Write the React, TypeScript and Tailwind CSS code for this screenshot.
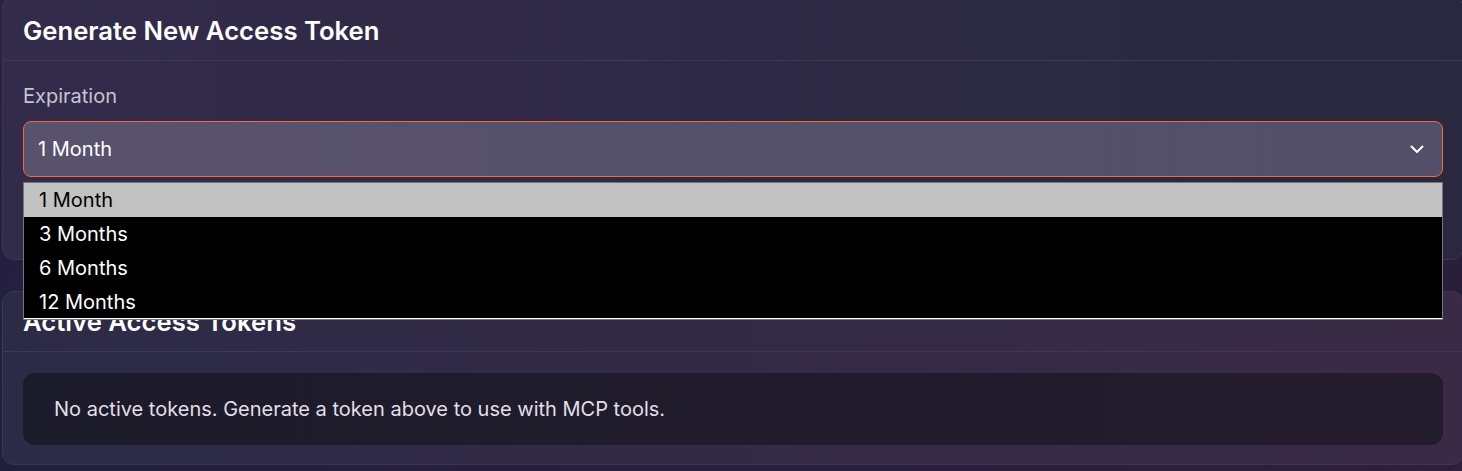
import React from "react";

export default function App() {
  const options = ["1 Month", "3 Months", "6 Months", "12 Months"];
  return (
    <div
      className="relative w-[1462px] h-[471px] overflow-hidden bg-gradient-to-br from-[#2a2246] via-[#211f3c] to-[#2e1f3b]"
      style={{ fontFamily: "Inter, 'Noto Sans', sans-serif" }}
    >
      <div className="flex flex-col gap-[31px] ml-[2px] w-[1462px] -mt-[4px]">
        {/* Card 1 */}
        <div className="rounded-xl border border-[#3b3656] bg-gradient-to-r from-[#332b4a] to-[#29283f] h-[264px]">
          <div className="h-[64px] pt-[4px] flex items-center px-[20px] border-b border-[#3d3857]">
            <h2 className="text-[25.7px] font-semibold text-white leading-none">Generate New Access Token</h2>
          </div>
          <div className="px-[20px] pt-[21px]">
            <div className="text-[20px] leading-[28px] text-[#c8c4d2] mb-[11px]">Expiration</div>
            <div className="h-[56px] rounded-lg border border-[#f26a37] bg-gradient-to-r from-[#58526c] to-[#534f69] flex items-center justify-between pl-[14px] pr-[18px]">
              <span className="text-[20px] text-white">1 Month</span>
              <svg width="14" height="9" viewBox="0 0 14 9" fill="none">
                <path d="M1.5 1.5 L7 7 L12.5 1.5" stroke="white" strokeWidth="2" strokeLinecap="round" strokeLinejoin="round" />
              </svg>
            </div>
          </div>
        </div>
        {/* Card 2 */}
        <div className="rounded-xl border border-[#3b3656] bg-gradient-to-r from-[#2c2b46] to-[#3a2a46] h-[174px]">
          <div className="h-[60px] flex items-center px-[20px] border-b border-[#3d3857]">
            <h2 className="text-[25.7px] font-semibold text-white leading-none">Active Access Tokens</h2>
          </div>
          <div className="px-[20px] pt-[21px]">
            <div className="h-[72px] rounded-xl bg-gradient-to-r from-[#1c1b2a] to-[#231c2d] flex items-center px-[31px]">
              <span className="text-[20px] text-[#e2dfe8]">No active tokens. Generate a token above to use with MCP tools.</span>
            </div>
          </div>
        </div>
      </div>

      {/* Native select popup */}
      <div className="absolute left-[23px] top-[182px] w-[1420px] border border-[#767676] bg-black">
        {options.map((o, i) => (
          <div
            key={o}
            className={
              i === 0
                ? "h-[34px] flex items-center pl-[15px] bg-[#c2c2c2] text-black text-[20px]"
                : "h-[34px] flex items-center pl-[15px] bg-black text-white text-[20px]"
            }
          >
            {o}
          </div>
        ))}
        <div className="h-[1px] bg-white -mt-[1px]" />
      </div>
    </div>
  );
}
